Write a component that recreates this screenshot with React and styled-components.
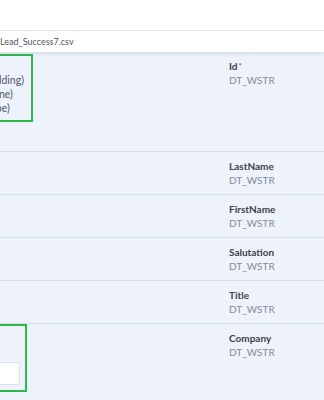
import styled, { createGlobalStyle } from "styled-components";

const GlobalStyle = createGlobalStyle`
  html, body {
    margin: 0;
    padding: 0;
    background: #ffffff;
    font-family: Lato, "Noto Sans", sans-serif;
    overflow: hidden;
  }
`;

const fields = [
  { name: "Id", required: true, height: 99 },
  { name: "LastName" },
  { name: "FirstName" },
  { name: "Salutation" },
  { name: "Title" },
  { name: "Company", input: true, height: 78 },
];

const App = () => {
  return (
    <Page>
      <GlobalStyle />
      <Header />
      <FileBar>
        <FileName>Lead_Success7.csv</FileName>
      </FileBar>
      <Table>
        {fields.map((f) => (
          <Row key={f.name} $height={f.height}>
            <Source>
              {f.required && (
                <MapBox $top={2} $right={33}>
                  <Options>
                    <li>Lead (Holding)</li>
                    <li>Lead (None)</li>
                    <li>Lead (Type)</li>
                  </Options>
                </MapBox>
              )}
              {f.input && (
                <MapBox $top={0} $right={27}>
                  <ValueInput />
                </MapBox>
              )}
            </Source>
            <Dest>
              <Label>
                {f.name}
                {f.required && <Req>*</Req>}
              </Label>
              <Type>DT_WSTR</Type>
            </Dest>
          </Row>
        ))}
      </Table>
    </Page>
  );
};

export default App;

const Page = styled.div`
  width: 324px;
  height: 400px;
  overflow: hidden;
  background: #eef3fb;
`;

const Header = styled.div`
  height: 30px;
  background: #ffffff;
  border-bottom: 1px solid #dfe6ef;
`;

const FileBar = styled.div`
  position: relative;
  z-index: 1;
  height: 21px;
  display: flex;
  align-items: center;
  background: #ffffff;
  box-shadow: 0 2px 4px rgba(40, 60, 90, 0.12);
`;

const FileName = styled.span`
  font-size: 9px;
  color: #4e5561;
`;

const Table = styled.div`
  display: flex;
  flex-direction: column;
`;

const Row = styled.div`
  display: grid;
  grid-template-columns: 229px 1fr;
  height: ${({ $height }) => $height || 42}px;
  border-bottom: 1px solid #d6e0ec;
`;

const Source = styled.div`
  position: relative;
  overflow: hidden;
`;

const MapBox = styled.div`
  position: absolute;
  right: ${({ $right }) => 229 - $right}px;
  top: ${({ $top }) => $top}px;
  width: 200px;
  height: 68px;
  box-sizing: border-box;
  border: 2px solid #2db84d;
  display: flex;
  flex-direction: column;
  justify-content: flex-end;
  padding: 0 5px 5px 0;
`;

const Options = styled.ul`
  list-style: none;
  margin: 0 0 auto 0;
  padding: 19px 0 0 123px;
  font-size: 10.5px;
  line-height: 14px;
  white-space: nowrap;
  color: #4e5561;
`;

const ValueInput = styled.div`
  height: 21px;
  background: #ffffff;
  border: 1px solid #d9e1ec;
  border-radius: 3px;
`;

const Dest = styled.div`
  padding-top: 7px;
  display: flex;
  flex-direction: column;
`;

const Label = styled.div`
  font-size: 10px;
  font-weight: 700;
  line-height: 14px;
  color: #3b424d;
`;

const Req = styled.span`
  color: #e0424b;
  font-size: 8px;
  vertical-align: top;
  margin-left: 1px;
`;

const Type = styled.div`
  font-size: 10px;
  line-height: 14px;
  color: #7f8ca0;
`;
